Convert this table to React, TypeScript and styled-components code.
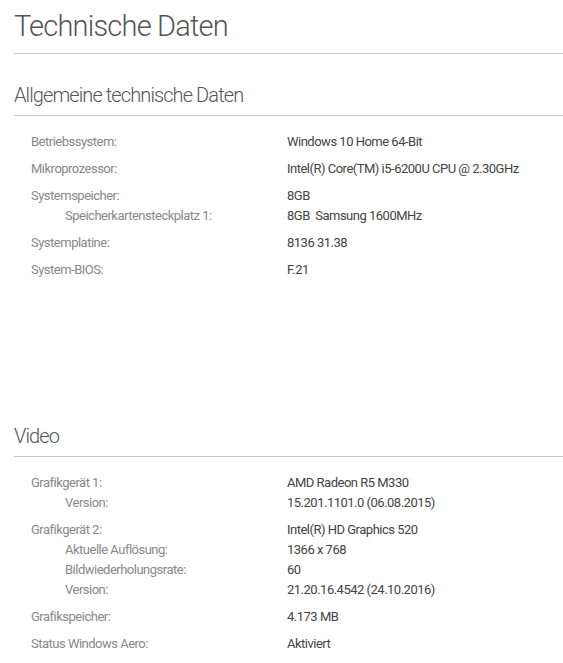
import styled, { createGlobalStyle } from "styled-components";

interface iRow {
  label: string;
  value: string;
  sub?: boolean;
}

interface iSection {
  title: string;
  groups: iRow[][];
  minHeight?: number;
}

const sections: iSection[] = [
  {
    title: "Allgemeine technische Daten",
    minHeight: 341,
    groups: [
      [{ label: "Betriebssystem:", value: "Windows 10 Home 64-Bit" }],
      [{ label: "Mikroprozessor:", value: "Intel(R) Core(TM) i5-6200U CPU @ 2.30GHz" }],
      [
        { label: "Systemspeicher:", value: "8GB" },
        { label: "Speicherkartensteckplatz 1:", value: "8GB\u00a0 Samsung 1600MHz", sub: true },
      ],
      [{ label: "Systemplatine:", value: "8136 31.38" }],
      [{ label: "System-BIOS:", value: "F.21" }],
    ],
  },
  {
    title: "Video",
    groups: [
      [
        { label: "Grafikgerät 1:", value: "AMD Radeon R5 M330" },
        { label: "Version:", value: "15.201.1101.0 (06.08.2015)", sub: true },
      ],
      [
        { label: "Grafikgerät 2:", value: "Intel(R) HD Graphics 520" },
        { label: "Aktuelle Auflösung:", value: "1366 x 768", sub: true },
        { label: "Bildwiederholungsrate:", value: "60", sub: true },
        { label: "Version:", value: "21.20.16.4542 (24.10.2016)", sub: true },
      ],
      [{ label: "Grafikspeicher:", value: "4.173 MB" }],
      [{ label: "Status Windows Aero:", value: "Aktiviert" }],
    ],
  },
];

const GlobalStyle = createGlobalStyle`
  body {
    margin: 0;
    background: #fff;
    font-family: "Roboto", "Liberation Sans", sans-serif;
    color: #444;
  }
`;

const Page = styled.div`
  padding-left: 14px;
`;

const Title = styled.h1`
  margin: 0;
  padding-top: 8px;
  height: 54px;
  box-sizing: border-box;
  font-size: 29px;
  line-height: 36px;
  font-weight: 300;
  letter-spacing: -0.8px;
  color: #555;
  border-bottom: 1px solid #c8c8c8;
`;

const Section = styled.section<{ $minHeight?: number }>`
  min-height: ${(props) => (props.$minHeight ? `${props.$minHeight}px` : "auto")};
  h2 {
    margin: 0;
    padding-top: 26px;
    height: 62px;
    box-sizing: border-box;
    font-size: 20px;
    line-height: 30px;
    font-weight: 300;
    letter-spacing: -0.9px;
    color: #555;
    border-bottom: 1px solid #c8c8c8;
  }
`;

const Groups = styled.div`
  padding: 16px 0 0 17px;
`;

const Group = styled.div`
  margin-bottom: 7px;
`;

const Row = styled.div<{ $sub?: boolean }>`
  display: grid;
  grid-template-columns: 256px auto;
  font-size: 13px;
  line-height: 20px;
  letter-spacing: -0.5px;
  .label {
    color: #888;
    padding-left: ${(props) => (props.$sub ? "34px" : "0")};
  }
  .value {
    color: #444;
  }
`;

function App() {
  return (
    <>
      <GlobalStyle />
      <Page>
        <Title>Technische Daten</Title>
        {sections.map((section) => (
          <Section key={section.title} $minHeight={section.minHeight}>
            <h2>{section.title}</h2>
            <Groups>
              {section.groups.map((group, i) => (
                <Group key={i}>
                  {group.map((row) => (
                    <Row key={row.label + row.value} $sub={row.sub}>
                      <span className="label">{row.label}</span>
                      <span className="value">{row.value}</span>
                    </Row>
                  ))}
                </Group>
              ))}
            </Groups>
          </Section>
        ))}
      </Page>
    </>
  );
}

export default App;
